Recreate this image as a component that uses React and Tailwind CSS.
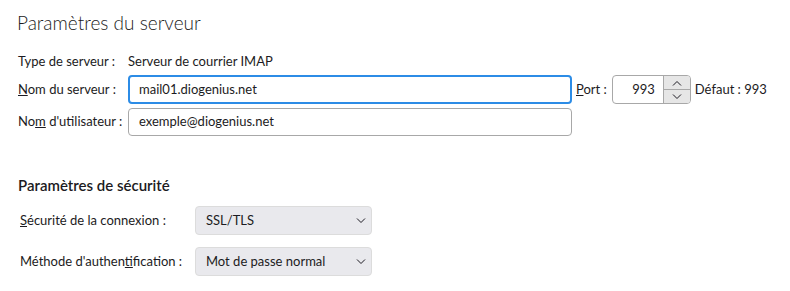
import React from "react";

const font = { fontFamily: 'Lato, "Noto Sans", sans-serif' };

function Chevron({ up = false, className = "" }) {
  return (
    <svg width="10" height="6" viewBox="0 0 10 6" className={className}>
      <path
        d={up ? "M1 5.5 L5 1.5 L9 5.5" : "M1 0.5 L5 4.5 L9 0.5"}
        fill="none"
        stroke="#1c1b22"
        strokeWidth="1"
      />
    </svg>
  );
}

function Select({ value }) {
  return (
    <div className="flex h-[29px] w-[177px] items-center justify-between rounded-[4px] border border-[#dcdcdc] bg-[#e9e9ed] pl-[10px] pr-[5px] text-[13px] text-[#1c1b22]">
      <span className="whitespace-nowrap">{value}</span>
      <Chevron />
    </div>
  );
}

export default function App() {
  return (
    <div className="h-[291px] w-[790px] bg-white text-[#1c1b22]" style={font}>
      <div className="pl-[17px] pt-[9px]">
        <h1 className="text-[19px] font-light leading-[28px] text-[#1c1b22]">Paramètres du serveur</h1>

        <div className="mt-[15px] flex h-[20px] items-center text-[13px]">
          <span className="w-[111px] whitespace-nowrap pl-[1px]">Type de serveur :</span>
          <span className="whitespace-nowrap">Serveur de courrier IMAP</span>
        </div>

        <div className="mt-[3px] flex flex-col gap-[4px] text-[13px]">
          <div className="flex items-center">
            <span className="w-[111px] whitespace-nowrap pl-[1px]"><u>N</u>om du serveur :</span>
            <div className="flex h-[29px] w-[444px] items-center rounded-[4px] border-2 border-[#2c8ce6] px-[9px]">
              mail01.diogenius.net
            </div>
            <span className="ml-[4px] whitespace-nowrap"><u>P</u>ort :</span>
            <div className="ml-[5px] flex h-[29px] w-[79px] overflow-hidden rounded-[4px] border border-[#a8a8a8]">
              <div className="flex flex-1 items-center justify-end pr-[8px]">993</div>
              <div className="flex w-[27px] flex-col border-l border-[#a8a8a8] bg-[#e6e6e6]">
                <div className="flex flex-1 items-center justify-center border-b border-[#a8a8a8]">
                  <Chevron up />
                </div>
                <div className="flex flex-1 items-center justify-center">
                  <Chevron />
                </div>
              </div>
            </div>
            <span className="ml-[4px] whitespace-nowrap">Défaut : 993</span>
          </div>
          <div className="flex items-center">
            <span className="w-[111px] whitespace-nowrap pl-[1px]">No<u>m</u> d'utilisateur :</span>
            <div className="flex h-[28px] w-[444px] items-center rounded-[4px] border border-[#a8a8a8] px-[10px]">
              exemple@diogenius.net
            </div>
          </div>
        </div>

        <h2 className="mt-[38px] pl-[1px] text-[15px] font-semibold leading-[22px]">Paramètres de sécurité</h2>

        <div className="mt-[10px] flex flex-col gap-[12px] text-[13px]">
          <div className="flex items-center">
            <span className="w-[178px] whitespace-nowrap pl-[3px]"><u>S</u>écurité de la connexion :</span>
            <Select value="SSL/TLS" />
          </div>
          <div className="flex items-center">
            <span className="w-[178px] whitespace-nowrap pl-[3px]">Méthode d'authen<u>t</u>ification :</span>
            <Select value="Mot de passe normal" />
          </div>
        </div>
      </div>
    </div>
  );
}
